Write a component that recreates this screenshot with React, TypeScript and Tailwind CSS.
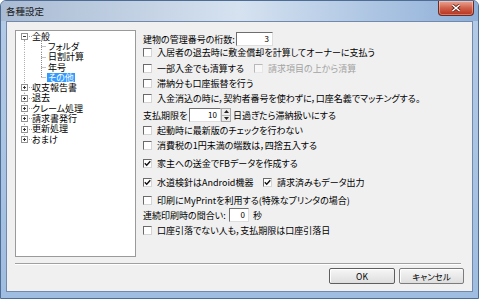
import React from 'react';

const font = "font-['Noto_Sans_CJK_JP','Liberation_Sans',sans-serif] [font-feature-settings:'palt']";

const Check = ({ checked = false, disabled = false }: { checked?: boolean; disabled?: boolean }) => (
    <span
        className={
            disabled
                ? 'flex h-[9px] w-[9px] shrink-0 items-center justify-center border border-t-[#b8b8b8] border-l-[#b8b8b8] border-r-[#e6e6e6] border-b-[#e6e6e6] bg-[#f7f7f7]'
                : 'flex h-[9px] w-[9px] shrink-0 items-center justify-center border border-t-[#6a6a6a] border-l-[#6a6a6a] border-r-[#d4d4d4] border-b-[#d4d4d4] bg-white'
        }
    >
        {checked && (
            <svg width="7" height="7" viewBox="0 0 7 7">
                <path d="M0.8 3.2 L2.7 5.2 L6.3 1.2" stroke="#111" strokeWidth="1.4" fill="none" />
            </svg>
        )}
    </span>
);

const Field = ({ value, w }: { value: string; w: string }) => (
    <span className={`flex h-[14px] ${w} shrink-0 items-center justify-end border border-t-[#6e6e6e] border-l-[#6e6e6e] border-r-[#dedede] border-b-[#dedede] bg-white pr-[3px] text-[8px] leading-[10px]`}>
        {value}
    </span>
);

const CheckRow = ({ label, checked, className }: { label: string; checked?: boolean; className: string }) => (
    <div className={`flex h-[12px] items-center gap-[5px] ${className}`}>
        <Check checked={checked} />
        <span className="whitespace-nowrap">{label}</span>
    </div>
);

// tree gutter: vertical dotted line + expander box
const RootGutter = ({ sign, first, last }: { sign: '+' | '-'; first?: boolean; last?: boolean }) => (
    <svg width="16" height="10.3" className="shrink-0" viewBox="0 0 16 10.3">
        <line x1="8.5" y1={first ? 5 : 0} x2="8.5" y2={last ? 5 : 10.3} stroke="#a0a0a0" strokeDasharray="1 1" />
        <line x1="11" y1="5.5" x2="16" y2="5.5" stroke="#a0a0a0" strokeDasharray="1 1" />
        <rect x="5.5" y="2.5" width="6" height="6" fill="#fff" stroke="#919191" />
        <line x1="7" y1="5.5" x2="10" y2="5.5" stroke="#333" />
        {sign === '+' && <line x1="8.5" y1="4" x2="8.5" y2="7" stroke="#333" />}
    </svg>
);

const ChildGutter = ({ last }: { last?: boolean }) => (
    <svg width="31" height="10.3" className="shrink-0" viewBox="0 0 31 10.3">
        <line x1="8.5" y1="0" x2="8.5" y2="10.3" stroke="#b0b0b0" strokeDasharray="1 1" />
        <line x1="25.5" y1="0" x2="25.5" y2={last ? 5.5 : 10.3} stroke="#8a8a8a" strokeDasharray="1 1" />
        <line x1="25.5" y1="5.5" x2="30" y2="5.5" stroke="#8a8a8a" strokeDasharray="1 1" />
    </svg>
);

const roots = ['収支報告書', '退去', 'クレーム処理', '請求書発行', '更新処理', 'おまけ'];
const children = ['フォルダ', '日割計算', '年号', 'その他'];

const Tree = () => (
    <div className="flex h-[227px] w-[121px] shrink-0 flex-col border border-[#9a9a9a] bg-white leading-[9px]">
        <div className="flex h-[10.3px] items-center">
            <RootGutter sign="-" first />
            <span className="whitespace-nowrap">全般</span>
        </div>
        {children.map((c, i) => (
            <div key={c} className="flex h-[10.3px] items-center">
                <ChildGutter last={i === children.length - 1} />
                <span
                    className={
                        i === children.length - 1
                            ? 'flex h-[9px] items-center bg-[#3399ff] px-px text-white'
                            : 'whitespace-nowrap px-px'
                    }
                >
                    {c}
                </span>
            </div>
        ))}
        {roots.map((r, i) => (
            <div key={r} className="flex h-[10.3px] items-center">
                <RootGutter sign="+" last={i === roots.length - 1} />
                <span className="whitespace-nowrap">{r}</span>
            </div>
        ))}
    </div>
);

const Spinner = () => (
    <span className="flex h-[14px] w-[10px] shrink-0 flex-col border border-[#a8a8a8] bg-[#ececec]">
        <span className="flex flex-1 items-center justify-center border-b border-[#b8b8b8]">
            <svg width="5" height="3" viewBox="0 0 5 3"><path d="M0 3 L2.5 0 L5 3Z" fill="#222" /></svg>
        </span>
        <span className="flex flex-1 items-center justify-center">
            <svg width="5" height="3" viewBox="0 0 5 3"><path d="M0 0 L2.5 3 L5 0Z" fill="#222" /></svg>
        </span>
    </span>
);

const Settings = () => (
    <div className="flex flex-col leading-[11px]">
        <div className="mt-[3px] flex h-[12px] items-center">
            <span className="w-[93px] whitespace-nowrap">建物の管理番号の桁数:</span>
            <Field value="3" w="w-[37px]" />
        </div>
        <CheckRow className="mt-[1px]" label="入居者の退去時に敷金償却を計算してオーナーに支払う" />
        <div className="mt-[4px] flex h-[12px] items-center">
            <div className="flex w-[111px] items-center gap-[5px]">
                <Check />
                <span className="whitespace-nowrap">一部入金でも清算する</span>
            </div>
            <div className="flex items-center gap-[5px] text-[#a3a3a3]">
                <Check disabled />
                <span className="whitespace-nowrap">請求項目の上から清算</span>
            </div>
        </div>
        <CheckRow className="mt-[3px]" label="滞納分も口座振替を行う" />
        <CheckRow className="mt-[3px]" label="入金消込の時に，契約者番号を使わずに，口座名義でマッチングする。" />
        <div className="mt-[5px] flex h-[12px] items-center">
            <span className="w-[46px] whitespace-nowrap">支払期限を</span>
            <Field value="10" w="w-[32px]" />
            <Spinner />
            <span className="ml-[2px] whitespace-nowrap">日過ぎたら滞納扱いにする</span>
        </div>
        <CheckRow className="mt-[3px]" label="起動時に最新版のチェックを行わない" />
        <CheckRow className="mt-[3px]" label="消費税の1円未満の端数は，四捨五入する" />
        <CheckRow className="mt-[6px]" checked label="家主への送金でFBデータを作成する" />
        <div className="mt-[7px] flex h-[12px] items-center">
            <div className="flex w-[120px] items-center gap-[5px]">
                <Check checked />
                <span className="whitespace-nowrap">水道検針はAndroid機器</span>
            </div>
            <div className="flex items-center gap-[5px]">
                <Check checked />
                <span className="whitespace-nowrap">請求済みもデータ出力</span>
            </div>
        </div>
        <CheckRow className="mt-[6px]" label="印刷にMyPrintを利用する(特殊なプリンタの場合)" />
        <div className="mt-[3px] flex h-[12px] items-center">
            <span className="w-[86px] whitespace-nowrap">連続印刷時の間合い:</span>
            <Field value="0" w="w-[20px]" />
            <span className="ml-[4px]">秒</span>
        </div>
        <CheckRow className="mt-[3px]" label="口座引落でない人も，支払期限は口座引落日" />
    </div>
);

const Btn = ({ label, primary }: { label: string; primary?: boolean }) => (
    <button
        className={`flex h-[16px] items-center justify-center rounded-[2px] border bg-gradient-to-b from-[#f6f6f6] to-[#dedede] text-[8.5px] leading-[10px] shadow-[inset_1px_1px_0_#ffffff] ${primary ? 'w-[66px] border-[#5e5e5e]' : 'w-[65px] border-[#7c7c7c]'}`}
    >
        {label}
    </button>
);

export default function App() {
    return (
        <div className={`flex h-[299px] w-[479px] flex-col overflow-hidden rounded-t-[6px] border border-[#4f6d94] bg-gradient-to-b from-[#b5cbe6] to-[#9fbde0] text-[9px] text-black ${font}`}>
            <div className="flex h-[20px] shrink-0 items-start justify-between bg-gradient-to-r from-[#a9bbd3] via-[#d6e2f0] to-[#8eafd8]">
                <span className="mt-[4px] ml-[5px] text-[9.5px] leading-[12px] text-[#1a1a1a]">各種設定</span>
                <div className="mr-[4px] flex h-[15px] w-[36px] items-center justify-center rounded-b-[4px] border border-t-0 border-[#6e2b22] bg-gradient-to-b from-[#e9a595] via-[#d0604a] to-[#b8301c] shadow-[inset_0_0_0_1px_rgba(255,255,255,0.35)]">
                    <svg width="10" height="8" viewBox="0 0 10 8">
                        <path d="M1.5 1 L8.5 7 M8.5 1 L1.5 7" stroke="#5a1e16" strokeWidth="3" />
                        <path d="M1.5 1 L8.5 7 M8.5 1 L1.5 7" stroke="#ffffff" strokeWidth="1.6" />
                    </svg>
                </div>
            </div>
            <div className="mx-[5px] mb-[6px] flex flex-1 flex-col border border-[#7189ab] bg-[#f0f0f0]">
                <div className="flex pt-[8px] pl-[8px]">
                    <Tree />
                    <div className="ml-[7px]">
                        <Settings />
                    </div>
                </div>
                <div className="mt-[6px] mr-[11px] ml-[8px] h-[2px] border-t border-b border-t-[#a0a0a0] border-b-white" />
                <div className="mt-[3px] flex justify-end gap-[4px] pr-[8px]">
                    <Btn label="OK" primary />
                    <Btn label="キャンセル" />
                </div>
            </div>
        </div>
    );
}
